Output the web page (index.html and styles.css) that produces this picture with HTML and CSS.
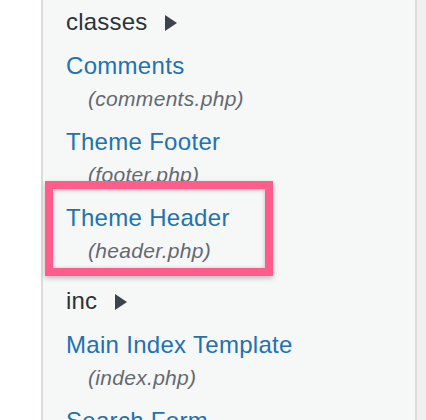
FILE: index.html
```html
<!DOCTYPE html>
<html lang="en">
<head>
<meta charset="utf-8">
<title>Theme Files</title>
<link rel="stylesheet" href="styles.css">
</head>
<body>
<div class="layout">
  <div class="gutter"></div>
  <div class="panel">
    <ul class="files">
      <li class="folder">classes <svg class="caret" width="12" height="16" viewBox="0 0 12 16"><polygon points="0,0 12,8 0,16"/></svg></li>
      <li class="file"><a class="name" href="#">Comments</a><span class="path">(comments.php)</span></li>
      <li class="file"><a class="name" href="#">Theme Footer</a><span class="path">(footer.php)</span></li>
      <li class="file highlighted"><a class="name" href="#">Theme Header</a><span class="path">(header.php)</span><span class="marker"></span></li>
      <li class="folder">inc <svg class="caret" width="12" height="16" viewBox="0 0 12 16"><polygon points="0,0 12,8 0,16"/></svg></li>
      <li class="file"><a class="name" href="#">Main Index Template</a><span class="path">(index.php)</span></li>
      <li class="file"><a class="name" href="#">Search Form</a><span class="path">(searchform.php)</span></li>
    </ul>
  </div>
  <div class="rest"></div>
</div>
</body>
</html>
```
FILE: styles.css
```css
html, body {
  margin: 0;
  padding: 0;
  background: #ffffff;
}
body {
  font-family: "Liberation Sans", Arial, sans-serif;
}
.layout {
  display: flex;
  height: 420px;
  overflow: hidden;
}
.gutter {
  width: 41px;
  flex: none;
  background: #ffffff;
}
.panel {
  width: 376px;
  flex: none;
  box-sizing: border-box;
  border-left: 2px solid #dcdcde;
  border-right: 2px solid #dcdcde;
  background: #f6f7f7;
  padding-left: 23px;
}
.rest {
  flex: 1;
  background: #f0f0f1;
}
.files {
  list-style: none;
  margin: -1px 0 0;
  padding: 0;
}
.files li {
  margin-bottom: 10px;
}
.folder {
  padding: 7px 0 2px;
  font-size: 24px;
  line-height: 32px;
  letter-spacing: 0.2px;
  color: #2c3338;
}
.caret {
  fill: #3c434a;
  margin-left: 11px;
  vertical-align: -1px;
}
.file {
  position: relative;
}
.name {
  display: block;
  font-size: 24px;
  line-height: 32px;
  letter-spacing: 0.3px;
  color: #2271b1;
  text-decoration: none;
}
.path {
  display: block;
  padding-left: 22px;
  font-size: 21px;
  line-height: 34px;
  letter-spacing: 0.3px;
  font-style: italic;
  color: #646970;
}
.marker {
  position: absolute;
  left: -21px;
  top: -21px;
  width: 228px;
  height: 95px;
  box-sizing: border-box;
  border: 8px solid #fe5d8c;
  box-shadow: 0 2px 5px rgba(0, 0, 0, 0.25), inset 0 1px 4px rgba(0, 0, 0, 0.25);
}
```
